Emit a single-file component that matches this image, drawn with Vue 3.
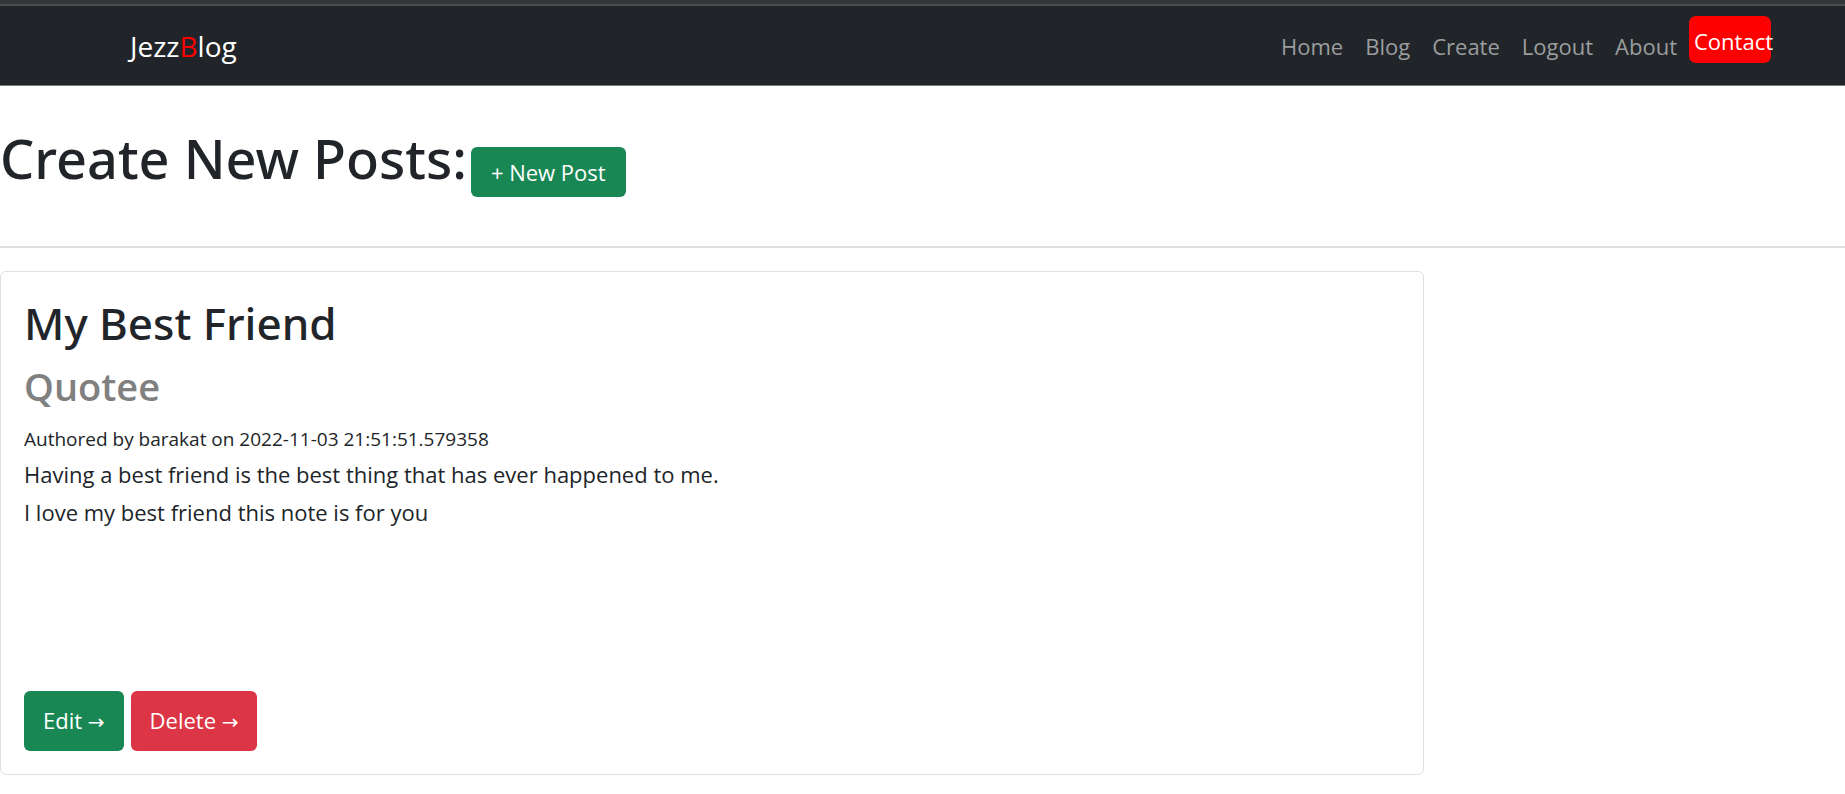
<script setup>
const links = ['Home', 'Blog', 'Create', 'Logout', 'About']
const paragraphs = [
  'Having a best friend is the best thing that has ever happened to me.',
  'I love my best friend this note is for you',
]
</script>

<template>
  <div class="page">
    <header class="navbar">
      <a class="brand" href="#">Jezz<span class="accent">B</span>log</a>
      <nav class="links">
        <a v-for="link in links" :key="link" class="link" href="#">{{ link }}</a>
        <a class="contact" href="#">Contact</a>
      </nav>
    </header>

    <main>
      <section class="intro">
        <h1>Create New Posts:</h1>
        <a class="button new" href="#">+ New Post</a>
      </section>
      <hr />
      <article class="card">
        <h2>My Best Friend</h2>
        <h3>Quotee</h3>
        <small>Authored by barakat on 2022-11-03 21:51:51.579358</small>
        <div class="body">
          <p v-for="text in paragraphs" :key="text">{{ text }}</p>
        </div>
        <div class="actions">
          <button class="button edit" type="button">Edit <span class="arrow">→</span></button>
          <button class="button delete" type="button">Delete <span class="arrow">→</span></button>
        </div>
      </article>
    </main>
  </div>
</template>

<style>
body {
  margin: 0;
  background: #fff;
}
</style>

<style scoped>
.page {
  color: #212529;
  font-family: "Segoe UI", "Open Sans", "Noto Sans", sans-serif;
  font-size: 22px;
  line-height: 38px;
}

a {
  text-decoration: none;
}

.navbar {
  box-sizing: border-box;
  display: flex;
  align-items: center;
  justify-content: space-between;
  height: 86px;
  padding: 2px 74px 0 130px;
  border-top: 4px solid #35363a;
  border-bottom: 1px solid #77797c;
  background: #212529;
  box-shadow: inset 0 2px #494c50;
}

.brand {
  color: #fff;
  font-size: 28px;
}

.accent {
  color: #f00;
}

.links {
  display: flex;
  align-items: center;
  gap: 22px;
}

.link {
  color: #9b9d9e;
}

.contact {
  box-sizing: border-box;
  width: 82px;
  height: 47px;
  margin: 0 0 12px -10px;
  padding: 6px 5px;
  border-radius: 7px;
  background: #f00;
  color: #fff;
  white-space: nowrap;
}

.intro {
  display: flex;
  align-items: flex-end;
  gap: 4px;
  padding: 36px 0 49px;
}

h1,
h2,
h3,
p {
  margin: 0;
}

h1,
h2 {
  font-family: "Segoe UI", "Noto Sans", "Open Sans", sans-serif;
  font-weight: 500;
}

h1 {
  padding-bottom: 3px;
  font-size: 54px;
  line-height: 72px;
}

.button {
  box-sizing: border-box;
  padding: 6px 20px;
  border: 0;
  border-radius: 6px;
  background: #198754;
  color: #fff;
  font: inherit;
  white-space: nowrap;
}

.new {
  height: 50px;
}

hr {
  height: 2px;
  margin: 0;
  border: 0;
  background: #dedfe0;
}

.card {
  box-sizing: border-box;
  width: 77.2%;
  margin-top: 23px;
  padding: 22px 23px 23px;
  border: 1px solid #dfdfdf;
  border-radius: 6px;
}

h2 {
  font-size: 44px;
  line-height: 58px;
}

h3 {
  padding: 10px 0 13px;
  color: #808080;
  font-size: 38px;
  font-weight: 600;
  line-height: 48px;
}

small {
  display: block;
  font-size: 19px;
  line-height: 32px;
}

.body {
  min-height: 236px;
}

.actions {
  display: flex;
  gap: 7px;
}

.actions .button {
  height: 60px;
  padding: 6px 19px;
}

.delete {
  background: #dc3545;
}

.arrow {
  font-family: "DejaVu Sans", sans-serif;
  font-size: 20px;
}
</style>
